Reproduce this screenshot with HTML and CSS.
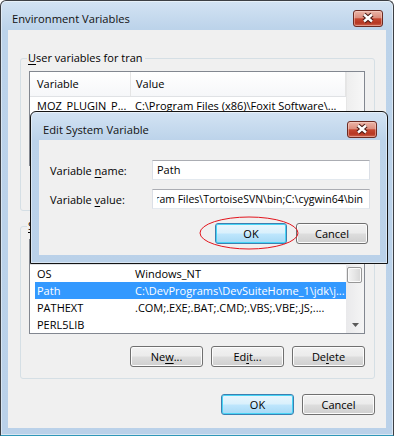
FILE: index.html
```html
<!DOCTYPE html>
<html>
<head>
<meta charset="utf-8">
<link rel="stylesheet" href="styles.css">
</head>
<body>
<div class="win outer">
  <div class="titlebar">
    <span class="title">Environment Variables</span>
    <span class="close"><svg width="30" height="17" viewBox="0 0 30 17"><path d="M11 4.5 L19 11.5 M19 4.5 L11 11.5" stroke="#4a1a14" stroke-width="4.6" fill="none"/><path d="M11 4.5 L19 11.5 M19 4.5 L11 11.5" stroke="#fff" stroke-width="2.4" fill="none"/></svg></span>
  </div>
  <div class="client">
    <fieldset class="group g1">
      <legend><u>U</u>ser variables for tran</legend>
      <div class="list">
        <div class="list-main">
          <div class="hdr"><div class="c1">Variable</div><div class="c2">Value</div></div>
          <div class="row"><div class="c1">MOZ_PLUGIN_P...</div><div class="c2">C:\Program Files (x86)\Foxit Software\...</div></div>
        </div>
        <div class="vscroll off"></div>
      </div>
      <div class="btnrow">
        <button class="btn">Ne<u>w</u>...</button>
        <button class="btn">Ed<u>i</u>t...</button>
        <button class="btn">De<u>l</u>ete</button>
      </div>
    </fieldset>
    <fieldset class="group g2">
      <legend><u>S</u>ystem variables</legend>
      <div class="list">
        <div class="list-main">
          <div class="hdr"><div class="c1">Variable</div><div class="c2">Value</div></div>
          <div class="row"><div class="c1">OS</div><div class="c2">Windows_NT</div></div>
          <div class="row sel"><div class="c1">Path</div><div class="c2">C:\DevPrograms\DevSuiteHome_1\jdk\j...</div></div>
          <div class="row"><div class="c1">PATHEXT</div><div class="c2">.COM;.EXE;.BAT;.CMD;.VBS;.VBE;.JS;....</div></div>
          <div class="row"><div class="c1">PERL5LIB</div><div class="c2"></div></div>
        </div>
        <div class="vscroll">
          <div class="arrow up"><svg width="7" height="4" viewBox="0 0 7 4"><path d="M0 4 L3.5 0 L7 4 Z" fill="#5a5a5a"/></svg></div>
          <div class="gap"></div>
          <div class="thumb"></div>
          <div class="track"></div>
          <div class="arrow down"><svg width="7" height="4" viewBox="0 0 7 4"><path d="M0 0 L7 0 L3.5 4 Z" fill="#5a5a5a"/></svg></div>
        </div>
      </div>
      <div class="btnrow">
        <button class="btn">Ne<u>w</u>...</button>
        <button class="btn">Ed<u>i</u>t...</button>
        <button class="btn">De<u>l</u>ete</button>
      </div>
    </fieldset>
    <div class="btnrow main">
      <button class="btn def">OK</button>
      <button class="btn">Cancel</button>
    </div>
  </div>
</div>

<div class="win dialog">
  <div class="titlebar">
    <span class="title">Edit System Variable</span>
    <span class="close"><svg width="30" height="17" viewBox="0 0 30 17"><path d="M11 4.5 L19 11.5 M19 4.5 L11 11.5" stroke="#4a1a14" stroke-width="4.6" fill="none"/><path d="M11 4.5 L19 11.5 M19 4.5 L11 11.5" stroke="#fff" stroke-width="2.4" fill="none"/></svg></span>
  </div>
  <div class="client dclient">
    <div class="field">
      <span class="lbl">Variable <u>n</u>ame:</span>
      <div class="input"><div class="clip">Path</div></div>
    </div>
    <div class="field">
      <span class="lbl">Variable <u>v</u>alue:</span>
      <div class="input"><div class="clip end"><span>ram Files\TortoiseSVN\bin;C:\cygwin64\bin</span></div></div>
    </div>
    <div class="btnrow dbtns">
      <button class="btn def">OK</button>
      <button class="btn">Cancel</button>
    </div>
  </div>
</div>

<svg class="mark" width="102" height="36" viewBox="0 0 102 36"><ellipse cx="51" cy="18" rx="49" ry="16" fill="none" stroke="#e3141c" stroke-width="1"/></svg>
</body>
</html>
```

FILE: styles.css
```css
html, body {
  margin: 0;
  padding: 0;
}
body {
  background: #ffffff;
  font-family: "Open Sans", "Noto Sans", sans-serif;
  font-size: 11px;
  color: #000;
  position: relative;
  width: 394px;
  height: 436px;
  overflow: hidden;
}
u {
  text-decoration: underline;
  text-underline-offset: 2px;
}

.win {
  box-sizing: border-box;
  display: flex;
  flex-direction: column;
  border: 1px solid #3c3f44;
  border-radius: 6px 6px 0 0;
  background: linear-gradient(#d3e3f3, #bcd3ea 28px, #bad1e9);
  box-shadow: inset 0 0 0 1px rgba(255, 255, 255, 0.45);
}
.outer {
  width: 394px;
  height: 436px;
  padding: 0 7px 7px 7px;
  border-bottom-color: #2f97b8;
}
.titlebar {
  display: flex;
  align-items: flex-start;
  height: 29px;
  flex: none;
}
.title {
  flex: 1;
  margin: 10px 0 0 4px;
  line-height: 15px;
  font-size: 11.2px;
  color: #111;
}
.close {
  width: 30px;
  height: 17px;
  margin: 9px 3px 0 0;
  box-sizing: border-box;
  border: 1px solid #6b2a22;
  border-radius: 3px;
  background: linear-gradient(#ebb5a8 0%, #dc8e7e 45%, #c5462f 52%, #b63722 80%, #d0654f 100%);
  box-shadow: inset 0 0 0 1px rgba(255, 220, 210, 0.45);
  display: flex;
  align-items: center;
  justify-content: center;
}
.close svg {
  display: block;
  margin: -1px;
}

.client {
  flex: 1;
  background: #f0f0f0;
  padding: 21px 11px 0 12px;
  display: flex;
  flex-direction: column;
}

.group {
  margin: 0;
  min-width: 0;
  border: 1px solid #d5dfe5;
  border-radius: 3px;
  padding: 6px 9px 11px 8px;
}
.group legend {
  line-height: 14px;
  padding: 0 2px 0 1px;
  margin-left: -2px;
}
.g2 {
  margin-top: 8px;
}

.list {
  height: 95px;
  box-sizing: border-box;
  border: 1px solid #828790;
  background: #fff;
  display: flex;
  overflow: hidden;
}
.list-main {
  flex: 1;
  min-width: 0;
  display: flex;
  flex-direction: column;
}
.hdr {
  height: 24px;
  flex: none;
  border-bottom: 1px solid #e0e2e5;
  background: linear-gradient(#ffffff, #f6f7f9);
  display: flex;
  align-items: stretch;
  line-height: 24px;
}
.hdr .c1 {
  width: 101px;
  box-sizing: border-box;
  padding-left: 7px;
  border-right: 1px solid #e5e5e5;
}
.hdr .c2 {
  flex: 1;
  padding-left: 5px;
  border-right: 1px solid #e5e5e5;
}
.row {
  height: 17px;
  flex: none;
  margin-left: 5px;
  display: flex;
  line-height: 17px;
  white-space: nowrap;
}
.row .c1 {
  width: 98px;
  flex: none;
  box-sizing: border-box;
  padding-left: 2px;
  overflow: hidden;
}
.row .c2 {
  flex: 1;
  min-width: 0;
  padding-left: 2px;
  overflow: hidden;
}
.row.sel {
  background: #3399ff;
  color: #fff;
}

.vscroll {
  width: 18px;
  flex: none;
  display: flex;
  flex-direction: column;
  background: linear-gradient(90deg, #e9e9eb, #f5f5f5);
}
.vscroll.off {
  background: linear-gradient(90deg, #eeeeee, #f7f7f7);
  border-left: 1px solid #e6e6e6;
  width: 17px;
}
.vscroll .arrow {
  height: 17px;
  flex: none;
  display: flex;
  align-items: center;
  justify-content: center;
}
.vscroll .arrow svg {
  display: block;
}
.vscroll .gap {
  height: 10px;
  flex: none;
}
.vscroll .thumb {
  height: 16px;
  flex: none;
  margin: 0 2px 0 1px;
  box-sizing: border-box;
  border: 1px solid #979797;
  border-radius: 2px;
  background: linear-gradient(90deg, #f4f4f4, #e6e6e6 50%, #d6d6d6);
  box-shadow: inset 0 0 0 1px #fbfbfb;
}
.vscroll .track {
  flex: 1;
}

.btnrow {
  display: flex;
  justify-content: flex-end;
  gap: 8px;
  margin-top: 12px;
}
.btn {
  width: 73px;
  height: 21px;
  box-sizing: border-box;
  padding: 0;
  margin: 0;
  font: inherit;
  color: #000;
  line-height: 18px;
  border: 1px solid #707070;
  border-radius: 3px;
  background: linear-gradient(#f2f2f2 0%, #ebebeb 48%, #dddddd 52%, #cfcfcf 100%);
  box-shadow: inset 0 0 0 1px #fcfcfc;
  text-align: center;
}
.btn.def {
  border-color: #3c7fb1;
  background: linear-gradient(#eaf6fd 0%, #d9f0fc 48%, #bee6fd 52%, #a7d9f5 100%);
  box-shadow: inset 0 0 0 1px #48d4f5;
}
.btnrow.main {
  margin-top: 15px;
}

.dialog {
  position: absolute;
  left: 30px;
  top: 111px;
  width: 358px;
  height: 153px;
  padding: 0 7px 8px 8px;
  border-color: #141414;
}
.dialog .titlebar {
  height: 28px;
}
.dclient {
  padding: 20px 10px 0 11px;
}
.field {
  display: flex;
  align-items: center;
  height: 20px;
  margin-bottom: 9px;
}
.lbl {
  width: 102px;
  flex: none;
  line-height: 15px;
}
.input {
  width: 218px;
  height: 20px;
  box-sizing: border-box;
  background: #fff;
  border: 1px solid #dbdfe6;
  border-top-color: #abadb3;
  border-bottom-color: #e3e9ef;
  padding: 0 6px 0 4px;
  line-height: 18px;
}
.input .clip {
  overflow: hidden;
  white-space: nowrap;
  display: flex;
}
.input .clip.end {
  justify-content: flex-end;
  font-size: 10.5px;
}
.input .clip span {
  flex: none;
}
.dbtns {
  margin-top: 5px;
  margin-right: 2px;
  gap: 9px;
}
.dbtns .btn {
  width: 72px;
}

.mark {
  position: absolute;
  left: 198px;
  top: 215px;
}
```
